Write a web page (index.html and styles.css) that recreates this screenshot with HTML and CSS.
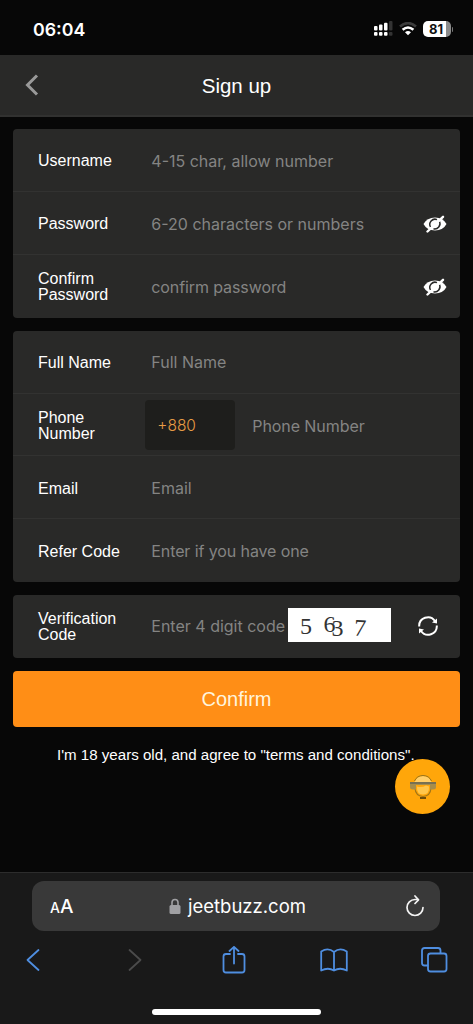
FILE: index.html
```html
<!DOCTYPE html>
<html lang="en">
<head>
<meta charset="utf-8">
<meta name="viewport" content="width=device-width">
<title>Sign up</title>
<link rel="stylesheet" href="styles.css">
</head>
<body>
<div class="screen">
  <div class="status">
    <span class="time">06:04</span>
    <div class="status-icons">
      <svg class="signal" width="19" height="16" viewBox="0 0 19 16" fill="#fff">
        <rect x="0" y="5" width="3.5" height="4.500" rx="1"/><rect x="5" y="3.500" width="3.5" height="6" rx="1"/><rect x="10" y="1.800" width="3.500" height="7.700" rx="1"/><rect x="15" y="0" width="3.500" height="9.500" rx="1" fill="#333"/>
        <rect x="0" y="11" width="3.5" height="3.800" rx="1"/><rect x="5" y="11" width="3.5" height="3.800" rx="1"/><rect x="10" y="11" width="3.500" height="3.800" rx="1"/><rect x="15" y="11" width="3.500" height="3.800" rx="1" fill="#333"/>
      </svg>
      <svg class="wifi" width="18" height="14" viewBox="0 0 18 14" fill="none">
        <path d="M1 4.500Q9-2.300 17 4.500" stroke="#3c3c3c" stroke-width="2.600"/>
        <path d="M3.600 7.700Q9 3.300 14.400 7.700" stroke="#fff" stroke-width="2.600"/>
        <path d="M6 10.200Q9 7.800 12 10.200L9 13.300Z" fill="#fff"/>
      </svg>
      <div class="battery"><span>81</span></div><i class="battery-tip"></i>
    </div>
  </div>
  <header class="header">
    <svg class="back" width="14" height="22" viewBox="0 0 14 22" fill="none" stroke="#999" stroke-width="3"><path d="M12 1.500L2.500 11L12 20.500"/></svg>
    <h1>Sign up</h1>
  </header>
  <main class="form">
    <section class="card">
      <div class="row"><label>Username</label><span class="hint user">4-15 char, allow number</span></div>
      <div class="row"><label>Password</label><span class="hint">6-20 characters or numbers</span>
        <svg class="eye" width="24" height="18" viewBox="0 0 24 18"><path d="M0.500 9Q4 2.500 12 2.500T23.500 9Q20 15.500 12 15.500T0.500 9Z" fill="#fff"/><path d="M7.500 12A5.200 5.200 0 0 1 14 4.600M16.500 6.500A5.200 5.200 0 0 1 10.500 13.700" fill="none" stroke="#292928" stroke-width="1.500"/><circle cx="12" cy="9" r="3.300" fill="#fff"/><path d="M4.500 16.500L20 1.800" stroke="#fff" stroke-width="2.400" stroke-linecap="round"/></svg></div>
      <div class="row"><label>Confirm<br>Password</label><span class="hint conf">confirm password</span>
        <svg class="eye" width="24" height="18" viewBox="0 0 24 18"><path d="M0.500 9Q4 2.500 12 2.500T23.500 9Q20 15.500 12 15.500T0.500 9Z" fill="#fff"/><path d="M7.500 12A5.200 5.200 0 0 1 14 4.600M16.500 6.500A5.200 5.200 0 0 1 10.500 13.700" fill="none" stroke="#292928" stroke-width="1.500"/><circle cx="12" cy="9" r="3.300" fill="#fff"/><path d="M4.500 16.500L20 1.800" stroke="#fff" stroke-width="2.400" stroke-linecap="round"/></svg></div>
    </section>
    <section class="card">
      <div class="row"><label>Full Name</label><span class="hint">Full Name</span></div>
      <div class="row"><label>Phone<br>Number</label><span class="prefix">+880</span><span class="hint phone">Phone Number</span></div>
      <div class="row"><label>Email</label><span class="hint">Email</span></div>
      <div class="row"><label>Refer Code</label><span class="hint refer">Enter if you have one</span></div>
    </section>
    <section class="card verify">
      <div class="row"><label>Verification<br>Code</label><span class="hint code">Enter 4 digit code</span>
        <svg class="captcha" width="103" height="34" viewBox="0 0 103 34" fill="#333"><text x="12" y="26">5</text><text x="35.500" y="24">6</text><text x="43.500" y="28">3</text><text x="66" y="28" transform="rotate(4 72 20)">7</text></svg>
        <svg class="refresh" width="20" height="20" viewBox="0 0 20 20" fill="none" stroke="#fff" stroke-width="2"><path d="M1.200 10.500A8.700 8.700 0 0 1 17 5"/><path d="M18.800 9.500A8.700 8.700 0 0 1 3 15"/><path d="M19 2.500V7.500L14 6.500Z" fill="#fff" stroke="none"/><path d="M1 17.500V12.500L6 13.500Z" fill="#fff" stroke="none"/></svg></div>
    </section>
    <button class="confirm">Confirm</button>
    <p class="terms">I'm 18 years old, and agree to "terms and conditions".</p>
  </main>
  <div class="chat">
    <svg width="28" height="26" viewBox="0 0 28 26" fill="none"><path d="M5.500 8Q8 2 14 2T22.500 8Z" fill="#ffcf6b"/><path d="M5.500 7Q8 1.500 14 1.500T22.500 7" stroke="#9a751c"/><path d="M6 14Q6.500 22 14 22.500Q21.500 22 22 14" stroke="#a37618" stroke-width="1.200"/><path d="M1 8H27V13Q27 15.500 24 15.500H21V11H7V15.500H4Q1 15.500 1 13Z" fill="#a68d4b"/><path d="M1 8H27V10H1Z" fill="#777052"/><path d="M8 12.500Q13 14 17 11.500L20 12.500Q20.500 20.500 14 20.500T8 12.500Z" fill="#ffc64c"/><path d="M11 24H17" stroke="#5e430c" stroke-width="1.800"/></svg>
  </div>
  <footer class="browser">
    <div class="address">
      <span class="aa"><small>A</small>A</span>
      <div class="site"><svg width="12" height="17" viewBox="0 0 12 17"><path d="M3 8V4.500a3 3 0 0 1 6 0V8" fill="none" stroke="#a0a0a3" stroke-width="1.600"/><rect x=".5" y="7" width="11" height="9" rx="1.500" fill="#a0a0a3"/></svg><span>jeetbuzz.com</span></div>
      <svg class="reload" width="20" height="22" viewBox="0 0 20 22" fill="none" stroke="#f4f4f4" stroke-width="1.700" stroke-linecap="round" stroke-linejoin="round"><path d="M13 4.500H10A8 8 0 1 0 18 12.500"/><path d="M10 1L13.500 4.800L10 8.500"/></svg>
    </div>
    <nav class="tools">
      <svg width="28" height="28" viewBox="0 0 28 28"><path d="M19.500 4L8.500 14L19.500 24"/></svg>
      <svg class="off" width="28" height="28" viewBox="0 0 28 28"><path d="M10.500 4L21.500 14L10.500 24"/></svg>
      <svg width="28" height="28" viewBox="0 0 28 28"><path d="M10 8H6Q3.500 8 3.500 10.500V24Q3.500 26.500 6 26.500H22Q24.500 26.500 24.500 24V10.500Q24.500 8 22 8H18M14 17.500V1M9.500 5L14 .8L18.500 5"/></svg>
      <svg width="28" height="28" viewBox="0 0 28 28"><path d="M14 6Q8 1 1.200 5.500V24.500Q8 21 14 24.500Q20 21 26.800 24.500V5.500Q20 1 14 6V24.500"/></svg>
      <svg width="28" height="28" viewBox="0 0 28 28"><path d="M7.500 19.500H4.500Q2 19.500 2 17V4.500Q2 2 4.500 2H18Q20.500 2 20.500 4.500V7"/><rect x="8" y="7.500" width="18.500" height="18" rx="2.500"/></svg>
    </nav>
    <div class="home"></div>
  </footer>
</div>
</body>
</html>
```
FILE: styles.css
```css
* { box-sizing: border-box; }
body { margin: 0; background: #070707; color: #fff; font-family: "Liberation Sans", Arial, sans-serif; }
.screen { position: relative; display: flex; flex-direction: column; width: 473px; height: 1024px; overflow: hidden; background: #070707; }
.status { height: 55px; flex: none; display: flex; align-items: center; justify-content: space-between; padding: 3px 20px 0 33px; }
.time { font: 600 17.800px Inter, sans-serif; }
.status-icons { display: flex; align-items: center; }
.signal { margin-right: 6px; }
.wifi { margin-right: 6px; }
.battery { width: 28px; height: 16px; border-radius: 5px; background: linear-gradient(90deg, #fff 81%, #8b8b8b 81%); color: #111; font: 700 13px/16px Inter, sans-serif; text-align: center; padding-right: 1px; }
.battery-tip { width: 1.500px; height: 5px; margin-left: 1px; background: #777; border-radius: 0 2px 2px 0; }
.header { height: 62px; flex: none; display: grid; grid-template-columns: 80px 1fr 80px; align-items: center; background: #292928; border-bottom: 2px solid #313130; }
.back { margin-left: 25px; }
.header h1 { margin: 1px 0 0; text-align: center; font-size: 20.500px; font-weight: 400; }
.form { flex: 1; padding: 12px 13px 0; }
.card { margin-bottom: 13px; background: #292928; border-radius: 4px; }
.row { display: flex; align-items: center; height: 62.900px; padding: 0 13px 0 25px; border-bottom: 1px solid #323231; }
.row:last-child { border-bottom: 0; }
.row label { width: 113.300px; padding-top: 3px; font-size: 16px; line-height: 16px; }
.row:last-child label { padding-top: 2px; }
.hint { padding-top: 1px; color: #848483; font: 16px Inter, sans-serif; white-space: nowrap; }
.user, .row:nth-child(2) .hint { padding-top: 2px; }
.conf, .refer { letter-spacing: -.1px; }
.eye { margin: 2px 0 0 auto; }
.prefix { width: 90px; height: 50px; margin-left: -6px; padding-left: 12px; border-radius: 4px; background: #1e1e1c; color: #e69b45; font: 300 15.500px/51px Inter, sans-serif; }
.phone { margin-left: 17px; letter-spacing: -.08px; }
.verify .row { height: 62.400px; }
.code { width: 137px; padding-top: 0; }
.captcha { margin-top: -2px; background: #fff; font: 24px "Liberation Serif", serif; }
.refresh { margin-left: auto; margin-right: 9px; }
.confirm { display: block; width: 100%; height: 56px; padding-top: 3px; border: 0; border-radius: 4px; background: #ff8e16; color: #fff4dc; font: 20px "Liberation Sans", sans-serif; }
.terms { margin: 19px 0 0 44px; font-size: 15.100px; line-height: 18px; white-space: nowrap; }
.chat { position: absolute; left: 395px; top: 759px; width: 55px; height: 55px; border-radius: 50%; background: #ffa60a; display: grid; place-items: center; }
.browser { height: 152px; flex: none; border-top: 1px solid #2c2c2c; background: #191919; padding: 8px 19px 0; }
.address { height: 50px; margin: 0 14px 0 13px; border-radius: 12px; background: #393939; display: grid; grid-template-columns: 60px 1fr 60px; align-items: center; }
.aa { margin-left: 18px; font: 500 19px Inter, sans-serif; }
.aa small { font-size: 14px; }
.site { display: flex; justify-content: center; align-items: center; gap: 7px; padding-left: 3px; font: 18.500px Inter, sans-serif; }
.reload { justify-self: end; margin-right: 15px; }
.tools { display: flex; justify-content: space-between; margin: 15px 6px 0 0; }
.tools svg { fill: none; stroke: #4f8ee0; stroke-width: 1.800; stroke-linecap: round; stroke-linejoin: round; }
.tools .off { stroke: #4b4b4b; }
.home { width: 169px; height: 6px; margin: 35px auto 0; border-radius: 3px; background: #fff; }
```
